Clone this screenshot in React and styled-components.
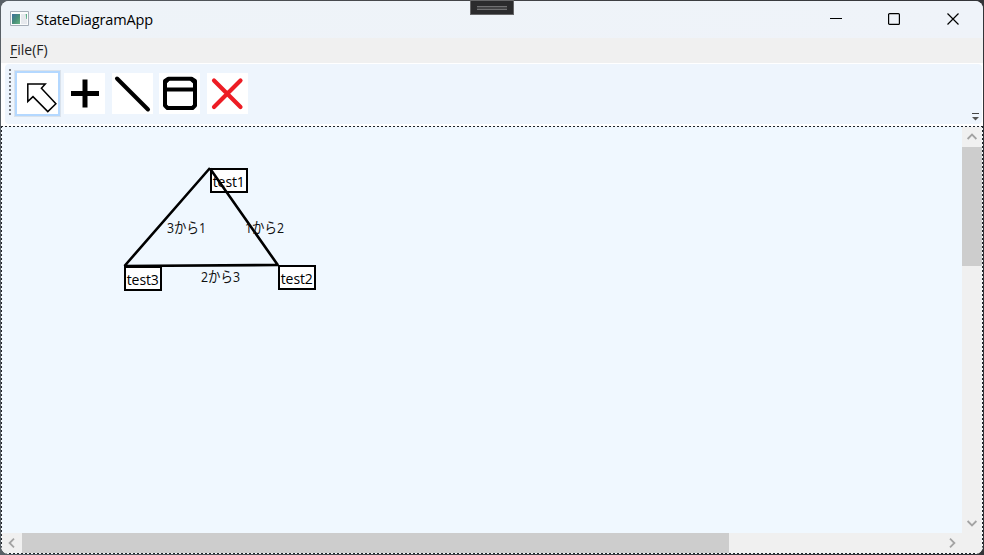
import React from "react";
import styled, { createGlobalStyle } from "styled-components";

const Global = createGlobalStyle`
  * { box-sizing: border-box; }
  html, body { margin: 0; padding: 0; overflow: hidden; }
  body { font-family: "Open Sans", "Noto Sans", "Noto Sans CJK JP", sans-serif; color: #000; background: #45484c; }
  svg { display: block; }
`;

const Desktop = styled.div`
  position: relative;
  width: 984px;
  height: 555px;
  padding: 1px;
  background: linear-gradient(90deg, #596066, #45464a 40%, #333438);
`;

const Window = styled.main`
  display: flex;
  flex-direction: column;
  width: 982px;
  height: 553px;
  border-radius: 8px;
  overflow: hidden;
  background: #fff;
`;

const TitleBar = styled.header`
  display: flex;
  align-items: center;
  flex: 0 0 37px;
  padding: 0 1px 1px 9px;
  background: linear-gradient(90deg, #eef3f8, #eff3f9);
`;

const Title = styled.span`
  flex: 1;
  margin-left: 7px;
  padding-top: 2px;
  font-size: 14.5px;
  line-height: 20px;
  letter-spacing: ${(p) => p.$track}px;
  white-space: nowrap;
`;

const CaptionButton = styled.button`
  display: flex;
  align-items: center;
  justify-content: center;
  width: 58.5px;
  height: 36px;
  padding: 0;
  border: 0;
  background: none;
`;

const DebugHandle = styled.div`
  position: absolute;
  top: 0;
  left: 470px;
  display: flex;
  justify-content: center;
  width: 44px;
  height: 15px;
  padding-top: 5px;
  border: 1px solid #656567;
  background: #2b2b2d;
`;

const Grip = styled.div`
  width: 30px;
  height: 4px;
  border-top: 1px solid #707072;
  border-bottom: 1px solid #707072;
  background: #434345;
`;

const MenuBar = styled.nav`
  flex: 0 0 25px;
  padding: 2px 0 0 9px;
  background: #f0f0f0;
  font-size: 14px;
  line-height: 20px;
  letter-spacing: 0;
  color: #222;
`;

const MenuKey = styled.span`
  text-decoration: underline;
  text-underline-offset: 2px;
`;

const Tray = styled.div`
  flex: 0 0 63px;
  padding: 1px 1px 2px 4px;
  background: #fff;
`;

const ToolBar = styled.div`
  display: flex;
  align-items: flex-start;
  height: 60px;
  padding: 6px 3px 0 4px;
  border-radius: 4px;
  background: #eef5fd;
`;

const DragHandle = styled.div`
  width: 2px;
  height: 47px;
  margin: -1px 3px 0 0;
  background: repeating-linear-gradient(#777b82 0 2px, transparent 2px 4px);
`;

const Tool = styled.button`
  width: 47px;
  height: 47px;
  margin-right: 0.4px;
  padding: 0;
  border: 1px solid ${(p) => (p.$active ? "#dae2eb" : "transparent")};
  background: none;
`;

const ToolFace = styled.span`
  display: block;
  width: 45px;
  height: 45px;
  border: 2px solid ${(p) => (p.$active ? "#b4d8ff" : "transparent")};
  background: #fff;
  background-clip: padding-box;
`;

const Overflow = styled.span`
  align-self: flex-end;
  margin-left: auto;
  margin-bottom: 3px;
`;

const Workspace = styled.section`
  position: relative;
  display: grid;
  grid-template: 406px 20px / 960px 20px;
  padding: 1px;
  height: 428px;
  background: #f0f0f0;
`;

const Dots = styled.div`
  position: absolute;
  inset: 0;
  border-radius: 0 0 8px 8px;
  pointer-events: none;
  --h: repeating-linear-gradient(90deg, #20242a 0 2px, #f4f8fc 2px 4px);
  --v: repeating-linear-gradient(#20242a 0 2px, #f4f8fc 2px 4px);
  background:
    var(--h) top / 100% 1px no-repeat,
    var(--h) bottom / 100% 1px no-repeat,
    var(--v) left / 1px 100% no-repeat,
    var(--v) right / 1px 100% no-repeat;
`;

const Canvas = styled.div`
  position: relative;
  overflow: hidden;
  background: #f0f8ff;
`;

const Node = styled.div`
  position: absolute;
  left: ${(p) => p.$x}px;
  top: ${(p) => p.$y}px;
  width: 37.5px;
  height: 25px;
  border: 2px solid #000;
  background: #fff;
  font-size: 14px;
  line-height: 23px;
  text-align: center;
  letter-spacing: -0.1px;
  white-space: nowrap;
`;

const Edges = styled.svg`
  position: absolute;
  inset: 0;
`;

const VBar = styled.div`
  display: flex;
  flex-direction: column;
  background: #f0f0f0;
`;

const HBar = styled.div`
  display: flex;
  background: #f0f0f0;
`;

const ArrowButton = styled.span`
  display: flex;
  align-items: center;
  justify-content: center;
  flex: 0 0 20px;
  transform: rotate(${(p) => p.$turn}deg);
`;

const Thumb = styled.div`
  flex: 0 0 ${(p) => p.$length}px;
  margin-${(p) => (p.$vertical ? "bottom" : "right")}: auto;
  background: #cdcdcd;
`;

const AppIcon = () => (
  <svg width="19" height="16" viewBox="0 0 19 16">
    <defs>
      <linearGradient id="panel" x1="0" y1="0" x2="1" y2="1">
        <stop offset="0" stopColor="#3d6f9d" />
        <stop offset=".55" stopColor="#489078" />
        <stop offset="1" stopColor="#69b484" />
      </linearGradient>
    </defs>
    <path d="M.5.5h18v14H.5z" fill="#fbfcfc" stroke="#a5aeb8" />
    <path d="M2 3h8v10H2z" fill="url(#panel)" />
    <path d="M11 3h6v10h-6z" fill="#e6e9ed" />
    <path d="M15.7 3H17v5h-.7z" fill="#5aaf86" />
  </svg>
);

const Chevron = ({ turn }) => (
  <ArrowButton $turn={turn}>
    <svg width="12" height="8" viewBox="0 0 12 8">
      <path d="M1.6 6 6 1.6 10.4 6" fill="none" stroke="#a3a3a3" strokeWidth="1.8" />
    </svg>
  </ArrowButton>
);

const strong = { fill: "none", stroke: "#000" };
const tools = [
  { name: "Select", art: <path d="M10.8 10.9h17.5l-3.9 4.4 14.5 15.5-8.1 7.8-14.8-15-5.2 5z" {...strong} strokeWidth="1.5" /> },
  { name: "Add", art: <path d="M7 20.5h28M21 6.5v28" {...strong} strokeWidth="5" /> },
  { name: "Line", art: <path d="M5 5.5 36 36.5" {...strong} strokeWidth="4" strokeLinecap="round" /> },
  { name: "State", art: <g {...strong} strokeWidth="4" strokeLinejoin="round"><path d="M9.5 5.8h23L36 8v24.5L33.5 35h-25L6 32.5V8z" /><path d="M6 16.5h30M9.5 5.8 6 9.5M32 5.8l4 3.7" /></g> },
  { name: "Delete", art: <path d="M7 7.5 33.5 34M33.5 7.5 7 34" fill="none" stroke="#ed1c24" strokeWidth="4.2" strokeLinecap="round" /> },
];

const nodes = [
  { label: "test1", x: 208, y: 41 },
  { label: "test2", x: 276, y: 138 },
  { label: "test3", x: 122, y: 139 },
];

const labels = [
  { text: "3から1", x: 165, y: 106 },
  { text: "1から2", x: 243, y: 106 },
  { text: "2から3", x: 199, y: 155 },
];

export default function App() {
  return (
    <>
      <Global />
      <Desktop>
        <Window>
          <TitleBar>
            <AppIcon />
            <Title $track={-0.12}>StateDiagramApp</Title>
            <CaptionButton aria-label="Minimize">
              <svg width="12" height="12"><path d="M0 5.5h12" stroke="#000" /></svg>
            </CaptionButton>
            <CaptionButton aria-label="Maximize">
              <svg width="12" height="12"><rect x=".6" y=".6" width="10.8" height="10.8" rx="1" {...strong} strokeWidth="1.2" /></svg>
            </CaptionButton>
            <CaptionButton aria-label="Close">
              <svg width="12" height="12"><path d="m.5.5 11 11m0-11-11 11" stroke="#000" strokeWidth="1.2" /></svg>
            </CaptionButton>
          </TitleBar>
          <MenuBar><MenuKey>F</MenuKey>ile(F)</MenuBar>
          <Tray>
            <ToolBar>
              <DragHandle />
              {tools.map(({ name, art }, i) => (
                <Tool key={name} aria-label={name} $active={i === 0}>
                  <ToolFace $active={i === 0}>
                    <svg width="41" height="41" viewBox="0 0 41 41">{art}</svg>
                  </ToolFace>
                </Tool>
              ))}
              <Overflow>
                <svg width="7" height="8"><path d="M0 .5h7" stroke="#444" /><path d="M0 4h7L3.5 7.5z" fill="#555" /></svg>
              </Overflow>
            </ToolBar>
          </Tray>
          <Workspace>
            <Canvas>
              {nodes.map((n) => <Node key={n.label} $x={n.x} $y={n.y}>{n.label}</Node>)}
              <Edges width="960" height="406">
                <path d="M208 41.5 276 138.3M276 138 122 139M122.5 139 208 41" {...strong} strokeWidth="2.6" />
                {labels.map((l) => (
                  <text key={l.text} x={l.x} y={l.y} fontSize="14.5" fill="#111" textLength="39" lengthAdjust="spacingAndGlyphs">{l.text}</text>
                ))}
              </Edges>
            </Canvas>
            <VBar>
              <Chevron turn={0} />
              <Thumb $vertical $length={119} />
              <Chevron turn={180} />
            </VBar>
            <HBar>
              <Chevron turn={270} />
              <Thumb $length={707} />
              <Chevron turn={90} />
            </HBar>
            <Dots />
          </Workspace>
        </Window>
        <DebugHandle><Grip /></DebugHandle>
      </Desktop>
    </>
  );
}
